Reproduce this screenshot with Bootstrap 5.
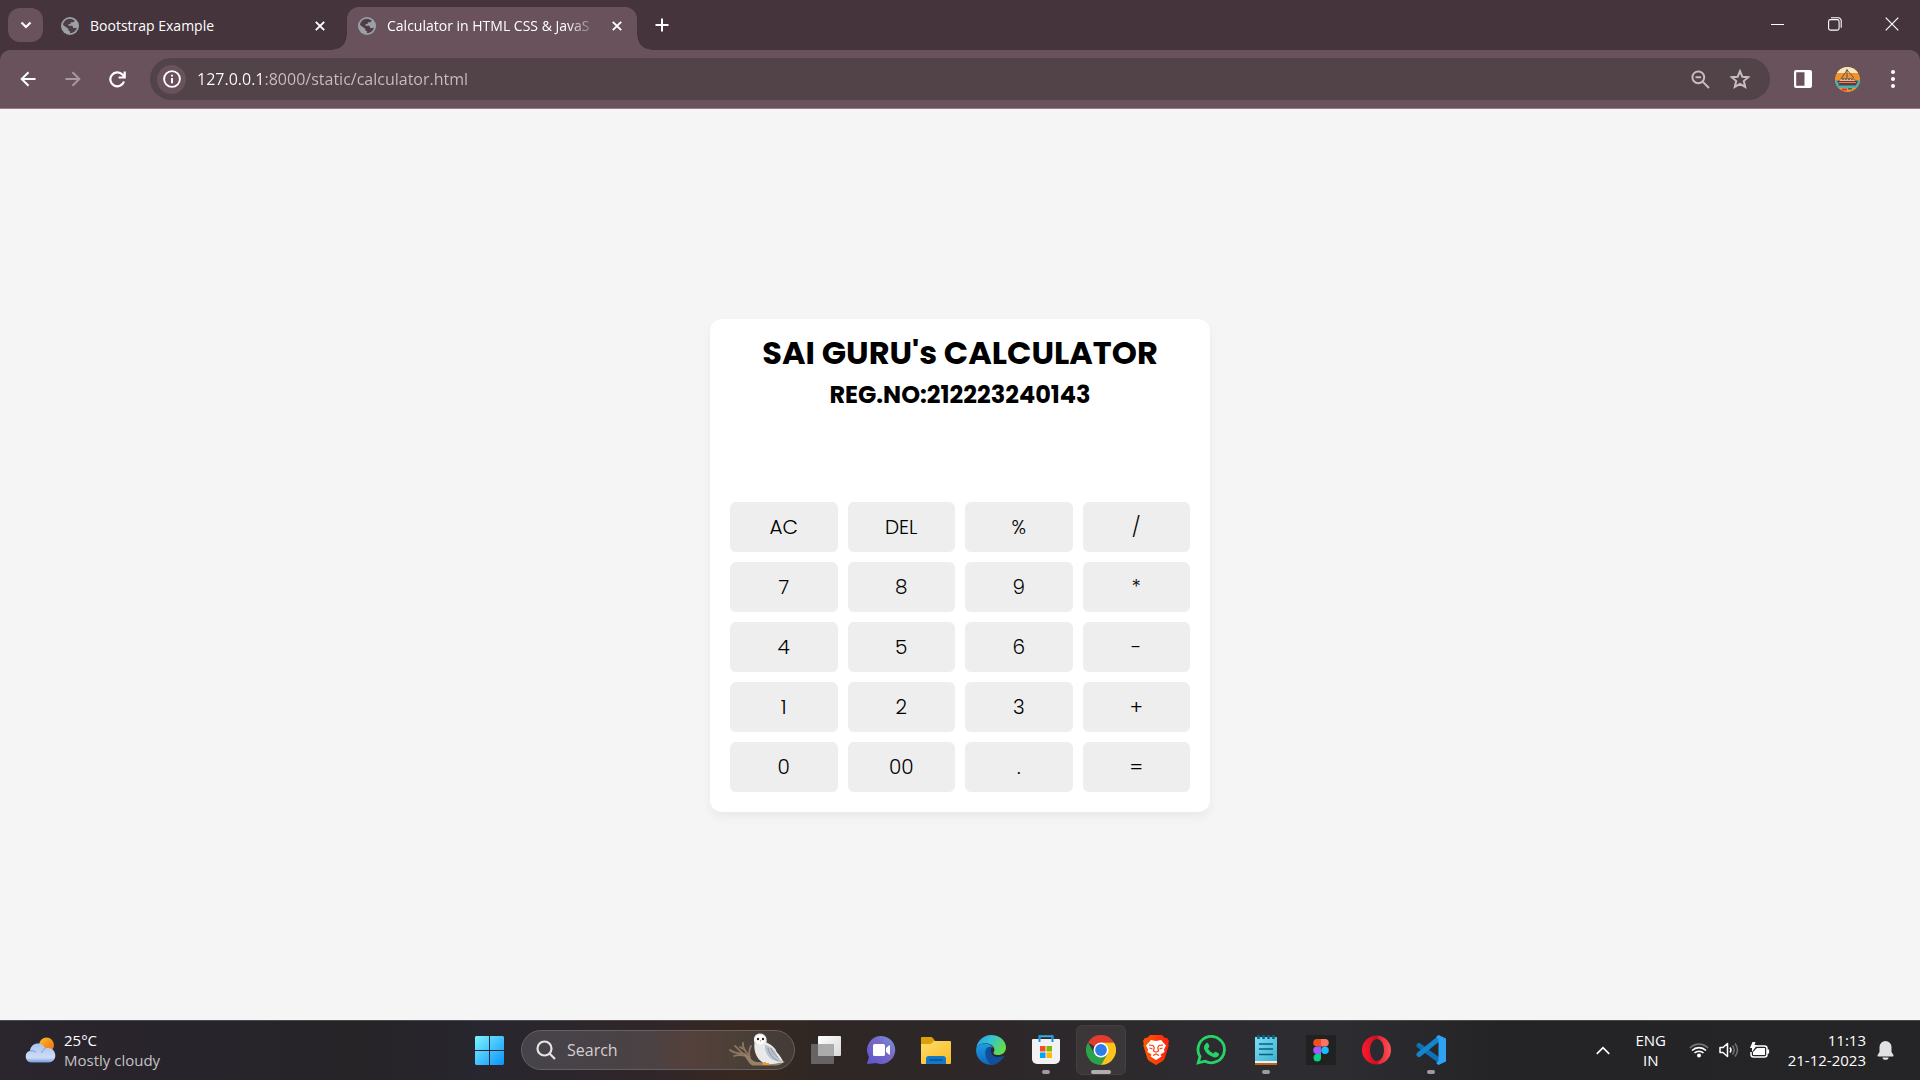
<!DOCTYPE html>
<html lang="en">
<head>
<meta charset="utf-8">
<meta name="viewport" content="width=device-width, initial-scale=1">
<title>Calculator in HTML CSS &amp; JavaScript</title>
<link href="https://cdn.jsdelivr.net/npm/bootstrap@5.3.0/dist/css/bootstrap.min.css" rel="stylesheet">
<style>
  body { font-family: "Open Sans", "Noto Sans", sans-serif; background: #f5f5f5; color: #fff; }
  svg { display: block; flex: none; }
  button { font-family: inherit; }
  .plain { background: none; border: 0; padding: 0; color: inherit; display: flex; align-items: center; justify-content: center; }

  /* tab strip */
  .strip { background: #45343c; height: 50px; padding-left: 8px; }
  .tab-menu { width: 35px; height: 34px; border-radius: 12px; background: #69525c; }
  .tab-item { height: 43px; padding: 0 10px 6px 11px; font-size: 14px; line-height: 20px; }
  .tab-idle { width: 290px; margin-left: 7px; }
  .tab-live { width: 290px; margin-left: 7px; background: #69525c; border-radius: 12px 12px 0 0; position: relative; }
  .tab-live::before, .tab-live::after { content: ""; position: absolute; bottom: 0; width: 14px; height: 14px; }
  .tab-live::before { right: 100%; background: radial-gradient(circle at 0 0, #45343c 13px, #69525c 14px); }
  .tab-live::after { left: 100%; background: radial-gradient(circle at 100% 0, #45343c 13px, #69525c 14px); }
  .tab-title { white-space: nowrap; text-align: left; margin-left: 11px; }
  .tab-fade { -webkit-mask-image: linear-gradient(to right, #000 86%, transparent 100%); mask-image: linear-gradient(to right, #000 86%, transparent 100%); }
  .tab-x { width: 20px; height: 20px; margin-left: 10px; }
  .win-btn { width: 57px; height: 48px; }
  .tab-new { width: 49px; height: 48px; }

  /* toolbar */
  .bar-wrap { background: #45343c; }
  .toolbar { background: #69525c; height: 59px; border-bottom: 1px solid #9a7a85; border-radius: 10px 10px 0 0; padding: 0 5px; }
  .tool { width: 45px; height: 42px; }
  .omni { background: #524349; height: 42px; border-radius: 21px; padding: 0 10px 0 7px; margin: 0 10px; }
  .site-info { width: 29px; height: 29px; border-radius: 50%; background: #69525c; }
  .url { border: 0; outline: 0; padding: 0; margin-left: 11px; font-size: 16px; line-height: 24px; color: transparent;
    background: linear-gradient(to right, #fff 68px, #c9bec3 68px); -webkit-background-clip: text; background-clip: text; }
  .omni-btn { width: 40px; height: 40px; }

  /* calculator */
  main { padding-top: 2px; }
  .calc { width: 500px; background: #fff; color: #000; border-radius: 12px; padding: 10px 20px 20px; box-shadow: 0 5px 10px rgba(0,0,0,.05);
    font-family: Poppins, Inter, sans-serif; text-align: center; }
  .calc h1 { font-size: 32px; line-height: 48px; font-weight: 700; margin: 0; }
  .calc h2 { font-size: 24px; line-height: 36px; font-weight: 700; margin: 0; }
  .screen { height: 79px; width: 100%; border: 0; outline: 0; text-align: right; font-size: 25px; background: transparent; margin-bottom: 10px; display: block; }
  .keys { display: grid; grid-template-columns: repeat(4, 1fr); gap: 10px; }
  .key { height: 50px; border: 0; border-radius: 6px; background: #eee; color: #000; font-size: 20px; font-weight: 300; padding: 0; }

  /* taskbar */
  .taskbar { height: 60px; display: grid; grid-template-columns: 1fr auto 1fr; box-shadow: inset 0 1px 0 #4a4b4d;
    background: linear-gradient(to right, #2b252d 0%, #28242c 10%, #262427 19%, #28262e 25%, #30262a 34%, #38281f 39%, #2e2725 43%, #2d2729 52%, #2d2b2f 62%, #2d2c30 70%, #242427 78%, #252528 100%); }
  .weather { padding-left: 25px; font-size: 15px; line-height: 20px; text-align: left; }
  .weather .sub { color: #c4c2c5; }
  .apps { gap: 5px; }
  .app { width: 50px; height: 50px; border-radius: 6px; position: relative; }
  .app-on { background: #3b3638; border: 1px solid #434041; }
  .app-dot::after { content: ""; position: absolute; bottom: 1px; left: 50%; margin-left: -4px; width: 8px; height: 4px; border-radius: 2px; background: #9d9b9d; }
  .app-on.app-dot::after { width: 20px; margin-left: -10px; bottom: 0; background: #b0adae; }
  .find { width: 274px; height: 40px; margin: 0 1px 0 2px; border: 1px solid #666062; border-radius: 20px; padding: 0 8px 0 14px;
    background: linear-gradient(to right, #46434a, #4a4244 45%, #55403b 62%, #4b4038 80%, #433b37); }
  .find input { border: 0; outline: 0; background: none; color: #fff; padding: 0; width: 100px; font-size: 16px; line-height: 24px; margin-left: 11px; }
  .find input::placeholder { color: #d3cfd0; opacity: 1; }
  .tray { font-size: 15px; line-height: 20px; padding-right: 26px; }
  .tray-up { width: 32px; height: 40px; }
  .lang { width: 64px; text-align: center; }
  .status { gap: 10px; margin-left: 6px; }
  .clock { margin-left: 18px; text-align: right; }
  .bell { margin-left: 10px; width: 18px; }
</style>
<script src="https://cdn.jsdelivr.net/npm/bootstrap@5.3.0/dist/js/bootstrap.bundle.min.js"></script>
</head>
<body class="d-flex flex-column vh-100 overflow-hidden">

<svg width="0" height="0" class="position-absolute" aria-hidden="true">
  <symbol id="globe" viewBox="0 0 18 18"><circle cx="9" cy="9" r="9" fill="#9aa0a6"/><path d="M9 1.700C11 2 12.600 2.600 13.800 3.800L12.500 5.200H10L9.500 7H7.800L7.300 8.800H10.500C11.500 8.800 12 9.400 12 10.200V11H14.500L15.900 10.800C15 14 12.300 16.200 9 16.300V14.300C8 14.300 7.300 13.500 7.300 12.600V11.700L2 8C2.300 4.500 5.300 1.800 9 1.700Z" fill="#4e3d45"/><path d="M2 8.500L6.500 12.500V13.800L8 16.100C4.500 15.500 1.800 12.500 2 8.500Z" fill="#9aa0a6"/></symbol>
  <symbol id="cross" viewBox="0 0 10 10"><path d="M.8.8 9.200 9.200M9.200.8.8 9.200" stroke="#fff" stroke-width="1.900"/></symbol>
</svg>

<header>
  <nav class="strip d-flex align-items-center" aria-label="Tabs">
    <button class="plain tab-menu" aria-label="Search tabs"><svg width="12" height="8" viewBox="0 0 12 8" fill="none" stroke="#fff" stroke-width="2.200"><path d="M1.500 1.500 6 6l4.500-4.500"/></svg></button>
    <div class="tab-item tab-idle d-flex align-items-center align-self-end">
      <svg width="18" height="18"><use href="#globe"/></svg>
      <a href="#" class="tab-title flex-grow-1 text-white text-decoration-none">Bootstrap Example</a>
      <button class="plain tab-x" aria-label="Close tab"><svg width="10" height="10"><use href="#cross"/></svg></button>
    </div>
    <div class="tab-item tab-live d-flex align-items-center align-self-end">
      <svg width="18" height="18"><use href="#globe"/></svg>
      <a href="#" class="tab-title tab-fade flex-grow-1 text-white text-decoration-none">Calculator in HTML CSS &amp; JavaS</a>
      <button class="plain tab-x" aria-label="Close tab"><svg width="10" height="10"><use href="#cross"/></svg></button>
    </div>
    <button class="plain tab-new" aria-label="New tab"><svg width="14" height="14" viewBox="0 0 14 14"><path d="M7 .500v13M.500 7h13" stroke="#fff" stroke-width="2"/></svg></button>
    <div class="d-flex ms-auto align-self-start">
      <button class="plain win-btn" aria-label="Minimize"><svg width="13" height="13" viewBox="0 0 13 13"><path d="M0 6.500h13" stroke="#fff"/></svg></button>
      <button class="plain win-btn" aria-label="Restore"><svg width="14" height="14" viewBox="0 0 14 14" fill="none" stroke="#fff" stroke-width="1.100"><rect x=".6" y="2.600" width="10.500" height="10.500" rx="1.800"/><path d="M3 .7h7.200a3 3 0 0 1 3 3v7"/></svg></button>
      <button class="plain win-btn" aria-label="Close"><svg width="14" height="14" viewBox="0 0 14 14"><path d="M.7.7l12.600 12.600M13.300.7.7 13.300" stroke="#fff" stroke-width="1.200"/></svg></button>
    </div>
  </nav>
  <div class="bar-wrap">
    <div class="toolbar d-flex align-items-center">
      <button class="plain tool" aria-label="Back"><svg width="16" height="16" viewBox="0 0 16 16" fill="none" stroke="#fff" stroke-width="2"><path d="M15.500 8H2M8.500 1.200 1.700 8l6.800 6.800"/></svg></button>
      <button class="plain tool" aria-label="Forward"><svg width="16" height="16" viewBox="0 0 16 16" fill="none" stroke="#a8989f" stroke-width="2"><path d="M.500 8H14M7.500 1.200 14.300 8l-6.800 6.800"/></svg></button>
      <button class="plain tool" aria-label="Reload"><svg width="17" height="17" viewBox="0 0 17 17" fill="none" stroke="#fff" stroke-width="2.200"><path d="M15 10.500A7 7 0 1 1 13.500 3.600L15.500 5.600M15.700.5v6H9.600"/></svg></button>
      <div class="omni d-flex align-items-center flex-grow-1">
        <button class="plain site-info" aria-label="View site information"><svg width="18" height="18" viewBox="0 0 18 18"><circle cx="9" cy="9" r="7.900" fill="none" stroke="#fff" stroke-width="1.900"/><path d="M9 8v5.300M9 4.700v1.900" stroke="#fff" stroke-width="2"/></svg></button>
        <input class="url flex-grow-1" type="text" aria-label="Address" value="127.0.0.1:8000/static/calculator.html">
        <button class="plain omni-btn" aria-label="Zoom"><svg width="19" height="19" viewBox="0 0 19 19" fill="none" stroke="#c5bdc0" stroke-width="2"><circle cx="7.300" cy="7.300" r="5.900"/><path d="M11.600 11.600 18 18M4.500 7.300h5.600"/></svg></button>
        <button class="plain omni-btn" aria-label="Bookmark this tab"><svg width="20" height="20" viewBox="0 0 20 20" fill="none" stroke="#c5bdc0" stroke-width="2"><path d="M10 2.200l2.300 5.500 6 .5-4.500 3.900 1.400 5.800L10 14.800l-5.200 3.100 1.400-5.800L1.700 8.200l6-.5z"/></svg></button>
      </div>
      <button class="plain tool" aria-label="Side panel"><svg width="18" height="18" viewBox="0 0 18 18"><path fill="#fff" fill-rule="evenodd" d="M2 0h14a2 2 0 0 1 2 2v14a2 2 0 0 1-2 2H2a2 2 0 0 1-2-2V2a2 2 0 0 1 2-2zm.2 2.200v13.600h8.300V2.200z"/></svg></button>
      <button class="plain tool" aria-label="Profile"><svg width="25" height="25" viewBox="0 0 25 25"><clipPath id="av"><circle cx="12.500" cy="12.500" r="12.500"/></clipPath><g clip-path="url(#av)"><rect width="25" height="25" fill="#f1932c"/><rect width="25" height="6" fill="#f5e6c0"/><rect y="13" width="25" height="8" fill="#4bb3a1"/><path d="M2 14.500l5-3h11l5 3-2 3.500H5z" fill="#7c2f3e"/><path d="M6 12h12l3 2H4z" fill="#d9c08f"/><path d="M12 2v9M12 3 6 12M12 3l7 8" stroke="#5a4641" stroke-width=".9" fill="none"/><path d="M7 12.500h11" stroke="#3f7f86" stroke-dasharray="2 1"/><path d="M4 15.500h17" stroke="#e28a3b"/><path d="M3 18h18" stroke="#31486f"/><rect x="7" y="21.500" width="5" height="2" fill="#e2304f"/><rect x="13" y="21" width="4" height="1.500" fill="#2b6f79"/></g></svg></button>
      <button class="plain tool" aria-label="Menu"><svg width="4" height="18" viewBox="0 0 4 18" fill="#fff"><circle cx="2" cy="2" r="2"/><circle cx="2" cy="9" r="2"/><circle cx="2" cy="16" r="2"/></svg></button>
    </div>
  </div>
</header>

<main class="flex-grow-1 d-flex align-items-center justify-content-center">
  <div class="calc">
    <h1>SAI GURU's CALCULATOR</h1>
    <h2>REG.NO:212223240143</h2>
    <input class="screen" type="text" aria-label="Result" readonly>
    <div class="keys">
      <button class="key">AC</button><button class="key">DEL</button><button class="key">%</button><button class="key">/</button>
      <button class="key">7</button><button class="key">8</button><button class="key">9</button><button class="key">*</button>
      <button class="key">4</button><button class="key">5</button><button class="key">6</button><button class="key">-</button>
      <button class="key">1</button><button class="key">2</button><button class="key">3</button><button class="key">+</button>
      <button class="key">0</button><button class="key">00</button><button class="key">.</button><button class="key">=</button>
    </div>
  </div>
</main>

<footer class="taskbar">
  <div class="d-flex align-items-center">
    <button class="plain weather gap-2">
      <svg width="31" height="26" viewBox="0 0 31 26"><defs><linearGradient id="sun" x1="0" y1="0" x2="1" y2="1"><stop stop-color="#fbbc2c"/><stop offset="1" stop-color="#ee6a10"/></linearGradient><linearGradient id="cl" x1="0" y1="0" x2="0" y2="1"><stop stop-color="#a9c4f4"/><stop offset=".75" stop-color="#cfdcf5"/><stop offset="1" stop-color="#6f97dd"/></linearGradient></defs><circle cx="21.500" cy="8" r="7.500" fill="url(#sun)"/><path d="M6 25.500a6 6 0 0 1-1-11.700C5.500 9 9 6.500 13 6.500c3.500 0 6 2 7.300 5 5-1.800 10 1.500 10 7 0 4-3 7-6.500 7z" fill="url(#cl)"/><path d="M5 14c3-.8 5 .4 6 1.500M20.300 11.500c-2.300 1-3.500 3-3.500 4.500" stroke="#7899d5" fill="none"/></svg>
      <span>25°C<br><span class="sub">Mostly cloudy</span></span>
    </button>
  </div>

  <div class="apps d-flex align-items-center">
    <button class="plain app" aria-label="Start"><svg width="29" height="29" viewBox="0 0 29 29"><defs><linearGradient id="win" x1="0" y1="0" x2="1" y2="1"><stop stop-color="#7df3ff"/><stop offset="1" stop-color="#0a93fb"/></linearGradient></defs><path fill="url(#win)" d="M1 0h13v14H0V1zM15 0h13l1 1v13H15zM0 15h14v14H1l-1-1zM15 15h14v13l-1 1H15z"/></svg></button>
    <label class="find d-flex align-items-center">
      <svg width="20" height="20" viewBox="0 0 20 20" fill="none" stroke="#e6e3e4" stroke-width="2.200"><circle cx="8.500" cy="8.500" r="7"/><path d="M13.500 13.500 19 19"/></svg>
      <input type="text" placeholder="Search" aria-label="Search">
      <svg class="ms-auto" width="57" height="34" viewBox="0 0 57 34"><g fill="none" stroke="#8d7660" stroke-width="1.800" stroke-linecap="round"><path d="M1 17c6 5 12 2 18 7M5 23c4-1.500 8-1 12 0M6 13c4 3 5 6 9 8M14 10c-1 5 3 9 7 14M22 13c-2 4-3 7-1 11M11 14l5 3"/></g><path d="M15 20c5 2 8 9 13 9 8 1 18 1 28-1-3 3-6 4.500-9 4.500H24c-4-1-6-7-9-10z" fill="#9a8266"/><path d="M25.500 10C23.500 4 27 .5 31 .5c5 0 7.500 4 6.500 9 5 2 8.500 5 10.500 10 3 3 5 6 6.500 10L49 30c-4 1.500-12 2-16-1-6-4-8.500-12-7.500-19z" fill="#e9e9ea"/><path d="M36 12c6 1 11 6 12 11l6.500 7-7-2c-7-1-12-8-11.500-16z" fill="#b9c1cb"/><path d="M39 15c1 6 5 10 10 13M42 15c1 4 4 7 7 9" stroke="#8e99a8" fill="none"/><path d="M26 5c1-4 9-4 10.500 0 0 4-3 6.500-5.200 6.500S26 9 26 5z" fill="#fff"/><circle cx="29" cy="6" r="1.200" fill="#33221e"/><circle cx="34" cy="6" r="1.200" fill="#33221e"/><path d="M30.800 7h1.500l-.7 2.500z" fill="#d6a47a"/><path d="M34 31h6M36 29v3" stroke="#ee9a2d" stroke-width="2"/></svg>
    </label>
    <button class="plain app" aria-label="Task view"><svg width="30" height="28" viewBox="0 0 30 28"><defs><linearGradient id="tv" x1="0" y1="0" x2="1" y2="1"><stop stop-color="#fff"/><stop offset="1" stop-color="#d8d8d8"/></linearGradient></defs><rect y="8" width="23" height="20" rx="1" fill="#656364"/><rect x="7" width="23" height="20" rx="1" fill="url(#tv)"/><path d="M7 8h16v12H7z" fill="#acabac"/></svg></button>
    <button class="plain app" aria-label="Chat"><svg width="29" height="28" viewBox="0 0 29 28"><defs><linearGradient id="ch" x1="1" y1="0" x2="0" y2="1"><stop stop-color="#6a9fe8"/><stop offset=".4" stop-color="#7b69c4"/><stop offset="1" stop-color="#5a55d0"/></linearGradient></defs><path d="M14.500 0a14 14 0 1 1-5.500 27L1 28c-1 0-1.200-.6-.7-1.500L2 21A14 14 0 0 1 14.500 0z" fill="url(#ch)"/><rect x="6" y="8" width="12" height="12" rx="1.500" fill="#fff"/><path d="M19 12l3-2.500c.6-.4 1-.2 1 .5v8c0 .7-.4 1-1 .5L19 16z" fill="#fff"/></svg></button>
    <button class="plain app" aria-label="File Explorer"><svg width="30" height="27" viewBox="0 0 30 27"><defs><linearGradient id="fo" x1="0" y1="0" x2="1" y2="1"><stop stop-color="#ffdb69"/><stop offset="1" stop-color="#f9bc25"/></linearGradient></defs><path d="M0 1q0-1 1-1h9q1 0 1.700.8L14 4v6H0z" fill="#dba009"/><path d="M0 7h8q2 0 3-1l2-2h16q1 0 1 1v21q0 1-1 1H1q-1 0-1-1z" fill="url(#fo)"/><path d="M5 27v-5a3 3 0 0 1 3-3h14a3 3 0 0 1 3 3v5z" fill="#1478c8"/><path d="M8.500 23h13" stroke="#084f91" stroke-width="1.500"/></svg></button>
    <button class="plain app" aria-label="Edge"><svg width="30" height="30" viewBox="0 0 30 30"><defs><linearGradient id="e1" x1="0" y1="0" x2="1" y2=".4"><stop stop-color="#2b9be0"/><stop offset=".5" stop-color="#34c2d6"/><stop offset="1" stop-color="#62dc50"/></linearGradient><linearGradient id="e2" x1="0" y1="0" x2="0" y2="1"><stop stop-color="#1d9de0"/><stop offset="1" stop-color="#0f68c0"/></linearGradient></defs><path d="M.3 13A15 15 0 0 1 15 0c9 0 15 6 15 12.500 0 5-4 7.500-8 7.500-3.500 0-5-1.500-4.300-2.800C19.500 14.500 18 10 12 8.500 7 7.500 2 9.500.3 13z" fill="url(#e1)"/><path d="M.3 13C2 9 8 7.500 12.500 9c2 .7 4 2 4.500 3.500-3-.5-6 2-6 6 0 5 4 9.500 9 10-8 4-20-2-20-13.500z" fill="url(#e2)"/><path d="M9.500 15.500C10 13 13 11 16.500 12c-1.500 1-2 3-1.500 5 1 4.500 7 6.500 12.500 3.700.6-.2.900.2.600.8C25 26.500 20 30 16 29.800 12 28 8.500 22 9.500 15.500z" fill="#114f9c"/></svg></button>
    <button class="plain app app-dot" aria-label="Microsoft Store"><svg width="30" height="30" viewBox="0 0 30 30"><path d="M8.500 7V1.300h13V7" fill="none" stroke="#28b2ee" stroke-width="2"/><path d="M1 5q0-1 1-1h26q1 0 1 1v19a5 5 0 0 1-5 5H6a5 5 0 0 1-5-5z" fill="#f2f2f2"/><path d="M8.500 7V1.500M21.500 7V1.500" stroke="#1490df" stroke-width="2"/><path fill="#f25022" d="M9 11h5.500v5.500H9z"/><path fill="#7fba00" d="M15.500 11H21v5.500h-5.500z"/><path fill="#00a4ef" d="M9 17.500h5.500V23H9z"/><path fill="#ffb900" d="M15.500 17.500H21V23h-5.500z"/></svg></button>
    <button class="plain app app-on app-dot" aria-label="Chrome"><svg width="30" height="30" viewBox="0 0 30 30"><path d="M15 15 2 7.500A15 15 0 0 1 28 7.500H15z" fill="#e33b2e"/><path d="M2 7.500A15 15 0 0 0 15 30l6.500-11.300L15 15 8.500 18.800z" fill="#2ba24c"/><path d="M28 7.500A15 15 0 0 1 15 30l6.500-11.200L15 7.500z" fill="#fcc31e"/><circle cx="15" cy="15" r="7.500" fill="#fff"/><circle cx="15" cy="15" r="5.900" fill="#2f7de9"/></svg></button>
    <button class="plain app" aria-label="Brave"><svg width="26" height="30" viewBox="0 0 26 30"><defs><linearGradient id="br"><stop stop-color="#ff5a00"/><stop offset="1" stop-color="#ff2010"/></linearGradient></defs><path d="M7 0h12l3 3 2-.3L26 6l-.8 2.500.5 2L22 22.500c-.6 2-1.500 3-3 4L13 30l-6-3.500c-1.500-1-2.400-2-3-4L.3 10.500l.5-2L0 6l2-3.300L4 3z" fill="url(#br)"/><path d="M8 5l5 1 5-1 5 5.500-2 4 .5 2.500-4 2.500 1 2L13 25l-5.500-3.500 1-2-4-2.500.5-2.500-2-4z" fill="#fff"/><path d="M6 10l4 .5 1.200 2-.7 3.500 2.500 1.200 2.500-1.200-.7-3.500 1.200-2 4-.5M6.500 13l3 1M19.500 13l-3 1M10 20.500l3-1.500 3 1.500" fill="none" stroke="#ff3b0c" stroke-width="1.200"/></svg></button>
    <button class="plain app" aria-label="WhatsApp"><svg width="30" height="30" viewBox="0 0 30 30"><path d="M2.200 27.800 4 21.500A13.200 13.200 0 1 1 9 26.200z" fill="none" stroke="#25d366" stroke-width="2.800"/><path d="M10.500 8c.7-.5 1.500-.3 1.800.4l1 2.600c.2.500 0 1-1.300 2.500 1.300 2.400 3 3.900 5.500 5 1-1.200 1.500-2 2.100-1.800l3 1.500c.6.300.4 2-.2 2.900-1 1.300-3 1.800-4.700 1.200-5-1.600-8-4.500-9.600-8.300C7.400 11.500 9 9 10.500 8z" fill="#25d366"/></svg></button>
    <button class="plain app app-dot" aria-label="Notepad"><svg width="22" height="30" viewBox="0 0 22 30"><defs><linearGradient id="np" x1="0" y1="0" x2="1" y2="1"><stop stop-color="#7fdff5"/><stop offset="1" stop-color="#3cb1d3"/></linearGradient></defs><rect y="25" width="22" height="5" fill="#b8671d"/><rect y="24" width="22" height="4" fill="#f1eeea"/><rect y="2" width="22" height="24" fill="url(#np)"/><path d="M3.500 0v4M8.500 0v4M13.500 0v4M18.500 0v4" stroke="#0c6480" stroke-width="2.600"/><path d="M4 9h14M4 14h14M4 19.500h14" stroke="#0c5f7c" stroke-width="1.700"/></svg></button>
    <button class="plain app" aria-label="Figma"><svg width="30" height="30" viewBox="0 0 30 30"><rect width="30" height="30" fill="#202121"/><path d="M11 4h4v7.500h-4a3.750 3.750 0 0 1 0-7.500z" fill="#f24e1e"/><path d="M15 4h4a3.750 3.750 0 0 1 0 7.500h-4z" fill="#ff7262"/><path d="M11 11.500h4V19h-4a3.750 3.750 0 0 1 0-7.500z" fill="#a259ff"/><circle cx="19" cy="15.250" r="3.750" fill="#1abcfe"/><path d="M11 19h4v3.500A3.750 3.750 0 1 1 11 19z" fill="#0acf83"/></svg></button>
    <button class="plain app" aria-label="Opera"><svg width="29" height="30" viewBox="0 0 29 30"><defs><linearGradient id="op"><stop stop-color="#ff1b2d"/><stop offset=".5" stop-color="#c90f23"/><stop offset=".6" stop-color="#e4283a"/><stop offset="1" stop-color="#ff5353"/></linearGradient></defs><path fill="url(#op)" fill-rule="evenodd" d="M14.500.5C22.500.5 29 7 29 15s-6.500 14.500-14.500 14.500S0 23 0 15 6.500.5 14.500.5zM15 4C11 4 8 9 8 15s3 11 7 11 7-5 7-11-3-11-7-11z"/></svg></button>
    <button class="plain app app-dot" aria-label="Visual Studio Code"><svg width="30" height="30" viewBox="0 0 30 30"><path d="M3 10.500 24 26" stroke="#0b72b8" stroke-width="5" stroke-linecap="round"/><path d="M3 19.500 23 3.500" stroke="#1585cb" stroke-width="5" stroke-linecap="round"/><path d="M22.500 0 30 3.500v23L22.500 30 20 28l2.500-2V4L20 2z" fill="#2ea2f3"/></svg></button>
  </div>

  <div class="tray d-flex align-items-center justify-content-end">
    <button class="plain tray-up" aria-label="Show hidden icons"><svg width="14" height="9" viewBox="0 0 14 9" fill="none" stroke="#fff" stroke-width="1.700"><path d="M.8 7.800 7 1.700l6.200 6.100"/></svg></button>
    <button class="plain lang">ENG<br>IN</button>
    <button class="plain status" aria-label="Network, volume, battery">
      <svg width="20" height="16" viewBox="0 0 20 16" fill="none" stroke-width="1.600"><path d="M1 6a12.500 12.500 0 0 1 18 0" stroke="#737274"/><path d="M3 8.500a10 10 0 0 1 14 0M5.500 11a6.500 6.500 0 0 1 9 0" stroke="#fff"/><circle cx="10" cy="13.500" r="2" fill="#fff"/></svg>
      <svg width="20" height="16" viewBox="0 0 20 16" fill="none" stroke-width="1.500"><path d="M1 5.500h3L8.500 1.500v13L4 10.500H1z" stroke="#fff" stroke-linejoin="round"/><path d="M11 5.500q2 2.500 0 5" stroke="#fff"/><path d="M13.500 3.500q3.500 4.500 0 9M16 1.500q5 6.500 0 13" stroke="#737274"/></svg>
      <svg width="21" height="17" viewBox="0 0 21 17"><path d="M7 4h8.500a2.500 2.500 0 0 1 2.500 2.500v6a2.500 2.500 0 0 1-2.500 2.500h-11A2.500 2.500 0 0 1 2 12.500V10" fill="none" stroke="#fff" stroke-width="1.500"/><path d="M8 6h8v7H4v-3z" fill="#fff"/><path d="M19 7.500v4" stroke="#fff" stroke-width="2.200"/><path d="M3.500 0h3L5.500 3H8l-5 7V6H1z" fill="#fff"/></svg>
    </button>
    <button class="plain clock">11:13<br>21-12-2023</button>
    <button class="plain bell" aria-label="Notifications"><svg width="17" height="20" viewBox="0 0 17 20" fill="#e2e1e2"><path d="M8.500 1A6 6 0 0 1 14.500 7v5l2 3.300q.3 1.200-.8 1.200H1.300Q.2 16.500.5 15.300l2-3.300V7a6 6 0 0 1 6-6zM5.500 17.500h6a3 2.300 0 0 1-6 0z"/></svg></button>
  </div>
</footer>
</body>
</html>
